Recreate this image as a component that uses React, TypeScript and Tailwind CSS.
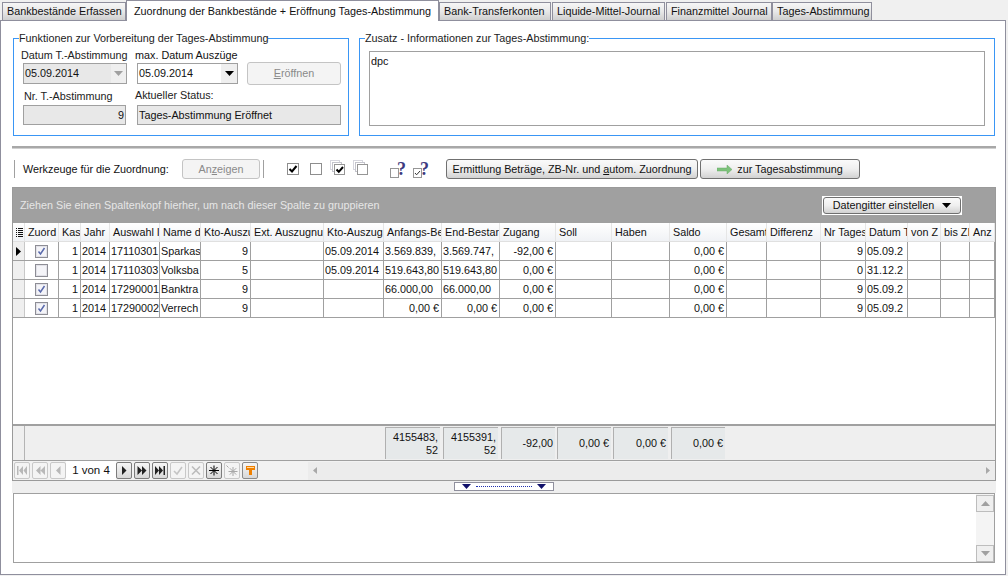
import React from "react";

const GRID = "grid grid-cols-[12px_34px_22px_29px_50px_41px_50px_73px_60px_58px_58px_56px_56px_58px_57px_40px_54px_45px_42px_33px_29px_25px]";

const headers = ["", "Zuord", "Kas", "Jahr", "Auswahl I", "Name d", "Kto-Auszu", "Ext. Auszugnu", "Kto-Auszug", "Anfangs-Be", "End-Bestar", "Zugang", "Soll", "Haben", "Saldo", "Gesamt", "Differenz", "Nr Tages", "Datum T", "von  Z", "bis ZI", "Anz"];

type Row = { sel: boolean; first?: boolean; c: string[] };
const rows: Row[] = [
  { sel: true, first: true, c: ["1", "2014", "17110301", "Sparkas", "9", "", "05.09.2014", "3.569.839,", "3.569.747,", "-92,00 €", "", "", "0,00 €", "", "", "9", "05.09.2", "", "", ""] },
  { sel: false, c: ["1", "2014", "17110303", "Volksba", "5", "", "05.09.2014", "519.643,80", "519.643,80", "0,00 €", "", "", "0,00 €", "", "", "0", "31.12.2", "", "", ""] },
  { sel: true, c: ["1", "2014", "17290001", "Banktra", "9", "", "", "66.000,00", "66.000,00", "0,00 €", "", "", "0,00 €", "", "", "9", "05.09.2", "", "", ""] },
  { sel: true, c: ["1", "2014", "17290002", "Verrech", "9", "", "", "0,00 €", "0,00 €", "0,00 €", "", "", "0,00 €", "", "", "9", "05.09.2", "", "", ""] },
];
const rightCols = new Set([0, 4, 9, 12, 15]);

function Tab({ w, label, active }: { w: string; label: string; active?: boolean }) {
  if (active)
    return (
      <div className={`${w} relative z-10 h-[21px] -mb-[1px] border border-b-0 border-[#8f8f9d] bg-white pl-[7px] text-[#111] flex items-center whitespace-nowrap`}>
        {label}
      </div>
    );
  return (
    <div className={`${w} h-[18px] border border-b-0 border-[#8f8f9d] bg-gradient-to-b from-[#f6f6f6] via-[#e8e8e8] to-[#cfcfcf] pl-[4px] flex items-center whitespace-nowrap`}>
      {label}
    </div>
  );
}

function Box({ className = "", children }: { className?: string; children?: React.ReactNode }) {
  return <div className={`border border-[#a0a0a0] flex items-center ${className}`}>{children}</div>;
}

function Arrow({ color = "#000" }: { color?: string }) {
  return (
    <svg width="9" height="5" viewBox="0 0 9 5">
      <path d="M0 0h9L4.5 5z" fill={color} />
    </svg>
  );
}

function Chk({ on, className = "" }: { on: boolean; className?: string }) {
  return (
    <svg width="12" height="12" viewBox="0 0 12 12" className={className}>
      <rect x="0.5" y="0.5" width="11" height="11" fill="#fff" stroke="#8e8e8e" />
      {on && <path d="M2.5 6l2.5 2.5L9.5 3" fill="none" stroke="#000" strokeWidth="2" />}
    </svg>
  );
}

function GridChk({ on }: { on: boolean }) {
  return (
    <svg width="13" height="13" viewBox="0 0 13 13">
      <rect x="0.5" y="0.5" width="12" height="12" fill="#e2e2e8" stroke="#8d8d95" />
      <rect x="2" y="2" width="9" height="9" fill="#f4f4f8" />
      {on && <path d="M3.5 6.5l2 2.5L9.5 3" fill="none" stroke="#5a6aac" strokeWidth="1.5" />}
    </svg>
  );
}

function StackChk({ on }: { on: boolean }) {
  return (
    <svg width="16" height="15" viewBox="0 0 16 15">
      <rect x="0.5" y="0.5" width="9" height="9" fill="#fff" stroke="#d6d6de" />
      <rect x="2.5" y="2.5" width="9" height="9" fill="#fff" stroke="#c4c4cc" />
      <rect x="4.5" y="4.5" width="10" height="10" fill="#fff" stroke="#969696" />
      {on && <path d="M6.5 9.5l2.3 2.3L13 7" fill="none" stroke="#000" strokeWidth="2" />}
    </svg>
  );
}

function QuestionChk({ on }: { on: boolean }) {
  return (
    <div className="relative w-[16px] h-[17px]">
      <div className="absolute left-0 bottom-0">
        <svg width="9" height="10" viewBox="0 0 9 10">
          <rect x="0.5" y="0.5" width="8" height="9" fill="#fff" stroke="#969696" />
          {on && <path d="M2 5l1.6 1.8L7 3" fill="none" stroke="#333" strokeWidth="1" />}
        </svg>
      </div>
      <span className="absolute left-[7px] -top-[1px] text-[#3d3a80] text-[18px] leading-[18px] font-bold font-['Liberation_Serif',serif]">?</span>
    </div>
  );
}

function NavBtn({ on, children, orange }: { on?: boolean; children: React.ReactNode; orange?: boolean }) {
  return (
    <div
      className={`w-[16px] h-[17px] rounded-[2px] border flex items-center justify-center ${
        on ? "border-[#7c7c7c] bg-gradient-to-b from-[#f6f6f6] to-[#d8d8d8]" : "border-[#c8c8c8] bg-[#f4f4f4]"
      } ${orange ? "border-[#8a8a8a]" : ""}`}
    >
      {children}
    </div>
  );
}

function NavIcon({ d, color, sw, w = 1.6 }: { d: string; color: string; sw?: boolean; w?: number }) {
  return (
    <svg width="12" height="11" viewBox="0 0 12 11">
      <path d={d} fill={sw ? "none" : color} stroke={sw ? color : "none"} strokeWidth={sw ? w : 0} />
    </svg>
  );
}

const SUM: { w: string; t: string[]; gap: string }[] = [
  { w: "w-[55px]", t: ["4155483,", "52"], gap: "mr-[3px]" },
  { w: "w-[55px]", t: ["4155391,", "52"], gap: "mr-[3px]" },
  { w: "w-[54px]", t: ["-92,00"], gap: "mr-[2px]" },
  { w: "w-[54px]", t: ["0,00 €"], gap: "mr-[2px]" },
  { w: "w-[55px]", t: ["0,00 €"], gap: "mr-[3px]" },
  { w: "w-[54px]", t: ["0,00 €"], gap: "" },
];

function PushBtn({ className = "", children, disabled }: { className?: string; children: React.ReactNode; disabled?: boolean }) {
  return (
    <div
      className={`rounded-[3px] border flex items-center justify-center ${
        disabled
          ? "border-[#c4c4c4] bg-[#f4f4f4] text-[#8a8a8a]"
          : "border-[#707070] bg-gradient-to-b from-[#fafafa] via-[#efefef] to-[#d2d2d2] text-[#111]"
      } ${className}`}
    >
      {children}
    </div>
  );
}

export default function App() {
  return (
    <div className="w-[1008px] h-[576px] overflow-hidden bg-[#f0f0f0] text-[10.8px] leading-[13px] text-[#111] font-['Liberation_Sans',sans-serif]">
      {/* tabs */}
      <div className="h-[20px] pl-[2px] flex items-end">
        <Tab w="w-[124px]" label="Bankbestände Erfassen" />
        <Tab w="w-[313px]" label="Zuordnung der Bankbestände + Eröffnung Tages-Abstimmung" active />
        <Tab w="w-[112px] mr-[1px]" label="Bank-Transferkonten" />
        <Tab w="w-[113px] mr-[1px]" label="Liquide-Mittel-Journal" />
        <Tab w="w-[106px]" label="Finanzmittel Journal" />
        <Tab w="w-[100px]" label="Tages-Abstimmung" />
      </div>

      {/* page */}
      <div className="w-[1006px] h-[555px] border border-[#8f8f9d] bg-white pt-[11px] pl-[11px] pr-[9px] flex flex-col">
        {/* group boxes */}
        <div className="flex gap-[10px] h-[104px] pl-[1px]">
          <fieldset className="w-[336px] h-[104px] border border-[#3a96f5] pl-[6px] pr-[6px]">
            <legend className="-ml-[1px] h-[13px] leading-[13px] text-[#222]">Funktionen zur Vorbereitung der Tages-Abstimmung</legend>
            <div className="flex flex-col">
              <div className="flex h-[13px] mt-[4px] pl-[1px]">
                <div className="w-[114px] text-[#222] whitespace-nowrap">Datum T.-Abstimmung</div>
                <div>max. Datum Auszüge</div>
              </div>
              <div className="flex pl-[3px] items-center h-[23px]">
                <Box className="w-[104px] h-[21px] bg-[#e8e8e8] pl-[1px] justify-between mr-[10px]">
                  <span>05.09.2014</span>
                  <span className="w-[15px] h-[19px] bg-[#efefef] flex items-center justify-center"><Arrow color="#a0a0a0" /></span>
                </Box>
                <Box className="w-[101px] h-[21px] bg-white pl-[1px] justify-between mr-[9px]">
                  <span>05.09.2014</span>
                  <span className="w-[16px] h-[19px] bg-[#efefef] flex items-center justify-center"><Arrow /></span>
                </Box>
                <PushBtn disabled className="w-[94px] h-[23px]"><span><u>E</u>röffnen</span></PushBtn>
              </div>
              <div className="flex mt-[4px] h-[14px] pl-[4px]">
                <div className="w-[111px] text-[#222] pt-[1px]">Nr. T.-Abstimmung</div>
                <div className="text-[#222]">Aktueller Status:</div>
              </div>
              <div className="flex mt-[2px] pl-[3px]">
                <Box className="w-[103px] h-[20px] bg-[#e8e8e8] justify-end pr-[1px] mr-[11px]">9</Box>
                <Box className="w-[204px] h-[20px] bg-[#e8e8e8] pl-[1px]">Tages-Abstimmung Eröffnet</Box>
              </div>
            </div>
          </fieldset>
          <fieldset className="w-[636px] h-[104px] border border-[#3a96f5] pl-[9px] pr-[9px]">
            <legend className="-ml-[4px] h-[13px] leading-[13px] text-[#222]">Zusatz - Informationen zur Tages-Abstimmung:</legend>
            <div className="mt-[6px] h-[75px] border border-[#a0a0a0] pl-[1px] pt-[3px]">dpc</div>
          </fieldset>
        </div>

        {/* separator */}
        <div className="mt-[10px] h-[3px] w-[984px] shrink-0 border-t-2 border-b border-t-[#a8a8a8] border-b-[#d0d0d0]" />

        {/* toolbar */}
        <div className="h-[38px] shrink-0 flex items-center pl-[2px] pt-[2px]">
          <div className="w-px h-[18px] bg-[#a0a0a0] mr-[8px]" />
          <div className="w-[159px] whitespace-nowrap">Werkzeuge für die Zuordnung:</div>
          <PushBtn disabled className="w-[78px] h-[20px]"><span>An<u>z</u>eigen</span></PushBtn>
          <div className="w-px h-[18px] bg-[#a0a0a0] ml-[3px] mr-[23px]" />
          <Chk on className="mr-[11px]" />
          <Chk on={false} className="mr-[8px]" />
          <div className="mr-[7px] -mt-[3px]"><StackChk on /></div>
          <div className="-mt-[3px]"><StackChk on={false} /></div>
          <div className="ml-[21px] mr-[7px]"><QuestionChk on={false} /></div>
          <QuestionChk on />
          <PushBtn className="ml-[17px] w-[252px] h-[20px] border-[#606060]"><span className="whitespace-nowrap">Ermittlung Beträge, ZB-Nr. und <u>a</u>utom. Zuordnung</span></PushBtn>
          <PushBtn className="ml-[2px] w-[160px] h-[20px] border-[#606060]">
            <svg width="15" height="9" viewBox="0 0 15 9" className="mr-[5px]">
              <path d="M0 3h10V0l5 4.5L10 9V6H0z" fill="#7cc27a" stroke="#6aa86a" strokeWidth="0.5" />
            </svg>
            <span>zur Tagesabstimmung</span>
          </PushBtn>
        </div>

        {/* grid */}
        <div className="w-[984px] h-[294px] shrink-0 border border-[#9a9a9a] flex flex-col">
          <div className="h-[35px] shrink-0 bg-[#a0a0a0] flex items-center justify-between pl-[7px] pr-[33px]">
            <span className="text-[#e6e6e6]">Ziehen Sie einen Spaltenkopf hierher, um nach dieser Spalte zu gruppieren</span>
            <div className="bg-white p-px -mt-[1px]">
              <PushBtn className="w-[138px] h-[17px] border-[#707070]">
                <span className="mr-[8px]">Datengitter einstellen</span>
                <Arrow />
              </PushBtn>
            </div>
          </div>

          {/* header */}
          <div className={`${GRID} h-[19px] shrink-0 bg-gradient-to-b from-[#ffffff] to-[#f0f2f5] border-b border-[#e0e0e0]`}>
            {headers.map((h, i) => (
              <div key={i} className="overflow-hidden whitespace-nowrap pl-[3px] flex items-center border-r border-[#e6e6e6]">
                {i === 0 ? (
                  <svg width="7" height="9" viewBox="0 0 7 9" className="shrink-0">
                    <path d="M0 0h1v1H0zM2 0h5v1H2zM0 2h1v1H0zM2 2h5v1H2zM0 4h1v1H0zM2 4h5v1H2zM0 6h1v1H0zM2 6h5v1H2zM0 8h1v1H0zM2 8h5v1H2z" fill="#111" />
                  </svg>
                ) : (
                  h
                )}
              </div>
            ))}
          </div>

          {/* rows */}
          <div className="flex-1 bg-white">
            {rows.map((r, ri) => (
              <div key={ri} className={`${GRID} h-[19px] border-b border-[#a0a0a0]`}>
                <div className="bg-[#efefef] border-r border-[#c8c8c8] flex items-center justify-center">
                  {r.first && (
                    <svg width="5" height="9" viewBox="0 0 5 9"><path d="M0 0l5 4.5L0 9z" fill="#000" /></svg>
                  )}
                </div>
                <div className="border-r border-[#a0a0a0] flex items-center justify-center"><GridChk on={r.sel} /></div>
                {r.c.map((t, i) => (
                  <div
                    key={i}
                    className={`overflow-hidden whitespace-nowrap border-r border-[#a0a0a0] flex items-center ${
                      rightCols.has(i) || (i >= 7 && i <= 9 && t.endsWith("€")) ? "justify-end pr-[2px]" : "pl-[1px]"
                    }`}
                  >
                    {t}
                  </div>
                ))}
              </div>
            ))}
          </div>

          {/* footer */}
          <div className="h-[37px] shrink-0 border-t-2 border-b border-t-[#a0a0a0] border-b-[#a0a0a0] bg-[#efefef] flex">
            <div className="w-[12px] border-r border-[#b4b4b4]" />
            <div className="w-[360px]" />
            {SUM.map((s, i) => (
              <div
                key={i}
                className={`${s.w} ${s.gap} h-[32px] mt-px border-l border-t border-l-[#b0b0b0] border-t-[#b0b0b0] bg-[#e6e9ea] pr-[2px] flex flex-col justify-center items-end`}
              >
                {s.t.map((x) => (
                  <div key={x}>{x}</div>
                ))}
              </div>
            ))}
          </div>

          {/* navigator */}
          <div className="h-[19px] shrink-0 flex items-center bg-[#f2f2f2] pl-[1px]">
            <div className="flex gap-[2px] items-center">
              <NavBtn><NavIcon color="#b8b8b8" d="M1 1h1.5v9H1zM3 5.5L7 1v9zM7.5 5.5L11 1v9z" /></NavBtn>
              <NavBtn><NavIcon color="#b8b8b8" d="M2 5.5L6.5 1v9zM6.5 5.5L11 1v9z" /></NavBtn>
              <NavBtn><NavIcon color="#b8b8b8" d="M4 5.5L8.5 1v9z" /></NavBtn>
            </div>
            <div className="w-[50px] h-[19px] bg-white flex items-center justify-center text-[#111] text-[11.5px]">1 von 4</div>
            <div className="flex gap-[2px] items-center">
              <NavBtn on><NavIcon color="#222" d="M4 1l4.5 4.5L4 10z" /></NavBtn>
              <NavBtn on><NavIcon color="#222" d="M1.5 1L6 5.5 1.5 10zM6 1l4.5 4.5L6 10z" /></NavBtn>
              <NavBtn on><NavIcon color="#222" d="M1 1l4 4.5L1 10zM5 1l4 4.5L5 10zM9.5 1H11v9H9.5z" /></NavBtn>
              <NavBtn><NavIcon color="#c4c4c4" sw d="M2 6l3 3 5-7" /></NavBtn>
              <NavBtn><NavIcon color="#bcbcbc" sw d="M2 1.5l8 8M10 1.5l-8 8" /></NavBtn>
              <NavBtn on><NavIcon color="#000" sw w={1} d="M6 0.5v10M1 5.5h10M2.5 2l7 7M9.5 2l-7 7" /></NavBtn>
              <NavBtn><NavIcon color="#a8a8a8" sw w={1} d="M7 2v9M2.5 6.5h9M3.8 3.2l6.4 6.4M10.2 3.2L3.8 9.6M0.5 0.5l2 2" /></NavBtn>
              <NavBtn on orange>
                <svg width="9" height="10" viewBox="0 0 9 10"><path d="M0 0h9v4H6v5H3V4H0z" fill="#f08000" /><path d="M1 1h7v1H1z" fill="#ffd9a0" /></svg>
              </NavBtn>
            </div>
            <div className="flex-1 ml-[50px] h-[18px] bg-[#ececec] flex items-center justify-between pl-[5px] pr-[5px]">
              <svg width="4" height="7" viewBox="0 0 4 7"><path d="M4 0v7L0 3.5z" fill="#a8a8a8" /></svg>
              <svg width="4" height="7" viewBox="0 0 4 7"><path d="M0 0v7l4-3.5z" fill="#a8a8a8" /></svg>
            </div>
          </div>
        </div>

        {/* splitter */}
        <div className="h-[12px] shrink-0 w-[984px] bg-[#efefef] flex items-start justify-center pt-px">
          <div className="w-[100px] h-[9px] bg-white border border-[#8f8f9d] flex items-center justify-between px-[7px]">
            <Arrow color="#10106a" />
            <div className="flex-1 mx-[5px] border-t border-dotted border-[#2030b0]" />
            <Arrow color="#10106a" />
          </div>
        </div>

        {/* memo */}
        <div className="w-[982px] ml-[1px] h-[70px] shrink-0 border border-[#a0a0a0] flex justify-end bg-white">
          <div className="w-[18px] flex flex-col justify-between bg-[#f4f4f4]">
            <div className="h-[17px] mt-[1px] border border-[#bdbdbd] bg-[#efefef] flex items-center justify-center">
              <svg width="9" height="5" viewBox="0 0 9 5"><path d="M0 5h9L4.5 0z" fill="#a0a0a0" /></svg>
            </div>
            <div className="h-[17px] border border-[#bdbdbd] bg-[#efefef] flex items-center justify-center">
              <Arrow color="#a0a0a0" />
            </div>
          </div>
        </div>
      </div>
    </div>
  );
}
